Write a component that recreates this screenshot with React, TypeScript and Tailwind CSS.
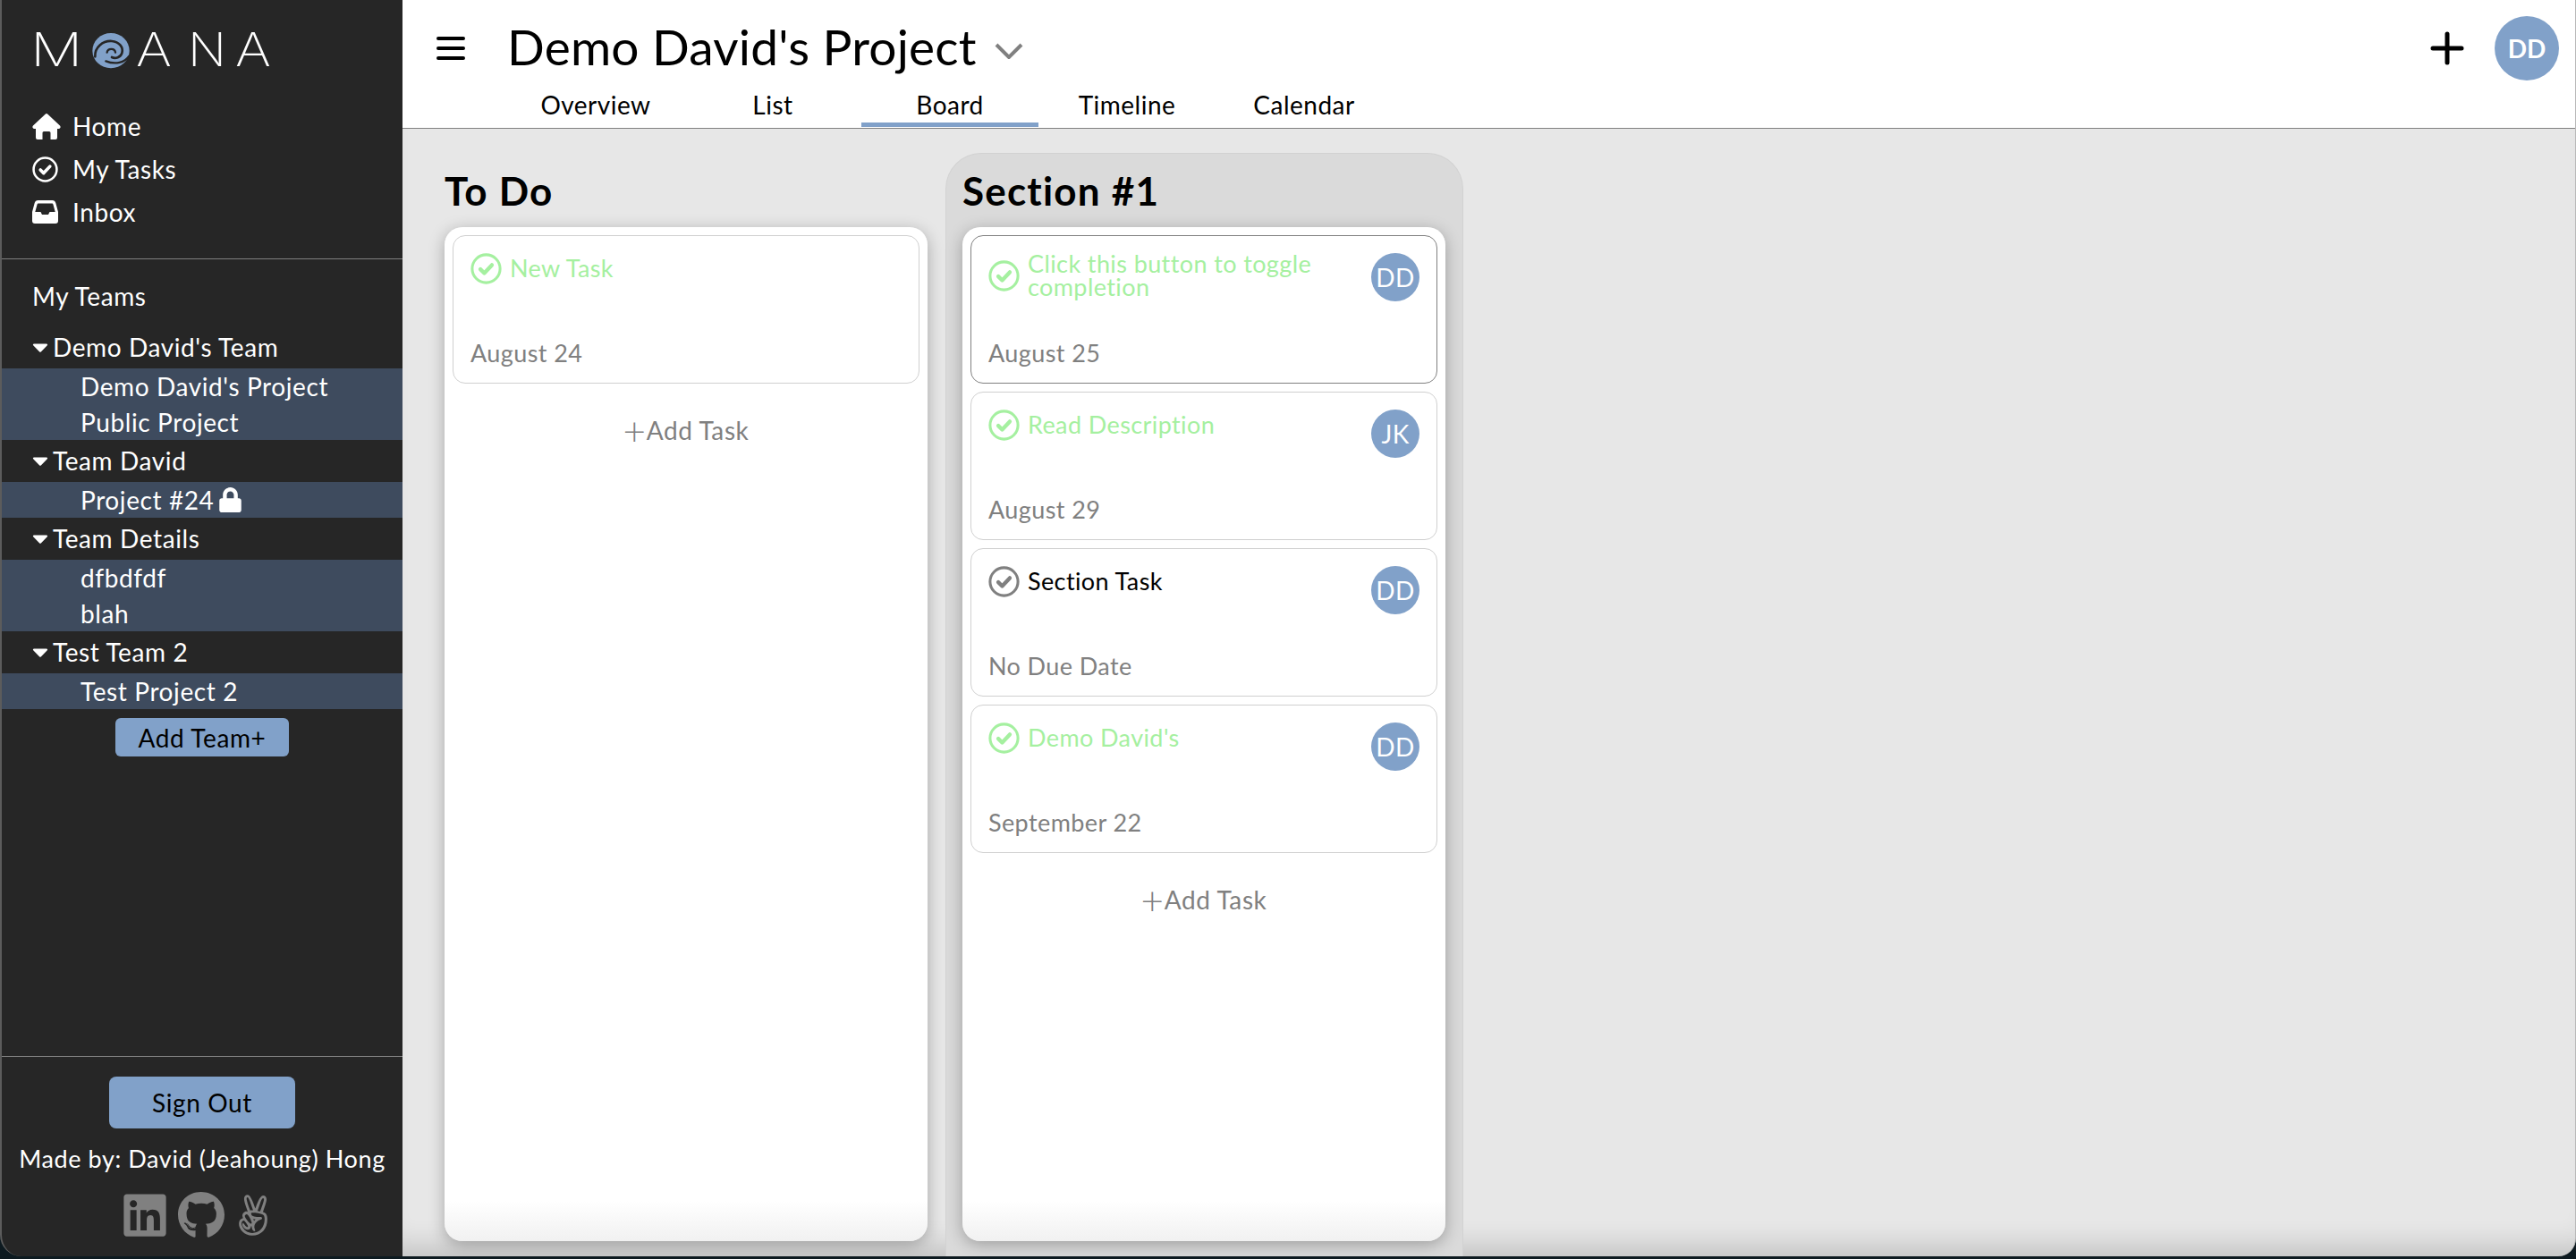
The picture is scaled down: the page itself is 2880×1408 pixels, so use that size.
import React from "react";
import { FaCaretDown, FaLinkedin, FaGithub, FaAngellist, FaLock } from "react-icons/fa";

function Check({ color, size = 35, sw = 3 }: { color: string; size?: number; sw?: number }) {
  return (
    <svg width={size} height={size} viewBox="0 0 24 24" fill="none" className="shrink-0">
      <circle cx="12" cy="12" r="10.7" stroke={color} strokeWidth={sw * 0.7} />
      <path d="M7.6 12.4l3 3 5.8-6.2" stroke={color} strokeWidth={sw} strokeLinecap="round" strokeLinejoin="round" />
    </svg>
  );
}

function HomeIcon() {
  return (
    <svg width="32" height="29" viewBox="0 0 32 29" className="shrink-0">
      <path fill="#fff" d="M14.6.7a2 2 0 0 1 2.8 0L31 13.6c1.2 1.2.5 3.4-1.2 3.4H28v10a2 2 0 0 1-2 2h-5.500v-7.500a1.500 1.500 0 0 0-1.500-1.500h-6a1.500 1.500 0 0 0-1.500 1.500V29H6a2 2 0 0 1-2-2V17H2.200C.5 17-.2 14.800 1 13.600z" />
    </svg>
  );
}

function InboxIcon() {
  return (
    <svg width="29" height="26" viewBox="0 0 29 26" className="shrink-0">
      <path fill="#fff" fillRule="evenodd" d="M6.500 0h16c2 0 3.200 1 3.800 3L29 13v10a3 3 0 0 1-3 3H3a3 3 0 0 1-3-3V13L2.700 3C3.300 1 4.500 0 6.500 0zM7 3.500c-.8 0-1.200.4-1.400 1.100L3.300 13h6.200l1.500 3h7l1.500-3h6.200l-2.300-8.400c-.2-.7-.6-1.100-1.400-1.100z" />
    </svg>
  );
}

function Swirl() {
  return (
    <svg width="42" height="40" viewBox="22 25 126 120" className="shrink-0">
      <ellipse cx="85" cy="84" rx="62" ry="59" fill="#81a1c9" />
      <g fill="none" stroke="#262626" strokeLinecap="round">
        <path d="M32 104C30 72 58 50 88 52c24 2 40 20 34 40-4 14-22 20-34 14" strokeWidth="8" />
        <path d="M72 90c2-14 26-16 28 0" strokeWidth="7" />
        <path d="M146 102c-14 22-46 30-78 17" strokeWidth="7" />
      </g>
    </svg>
  );
}

function Task({ title, date, done, avatar, hover }: { title: string; date: string; done?: boolean; avatar?: string; hover?: boolean }) {
  return (
    <div className={`h-[166px] shrink-0 rounded-[14px] border px-[19px] pt-[19px] bg-white flex flex-col tracking-[0.4px] ${hover ? "border-[#808080]" : "border-[#d0d0d0]"}`}>
      <div className="flex items-start justify-between h-[99px]">
        <div className="flex items-center gap-[9px] w-[420px]">
          <Check color={done ? "#a5f0a0" : "#808080"} />
          <div className={`text-[27px] leading-[26px] -mt-[1px] ${done ? "text-[#a5f0a0]" : "text-black"}`}>{title}</div>
        </div>
        {avatar && (
          <div className="w-[54px] h-[54px] rounded-full bg-[#81a1c9] text-white text-[28px] flex items-center justify-center shrink-0">{avatar}</div>
        )}
      </div>
      <div className="text-[27px] leading-[26px] text-[#808080]">{date}</div>
    </div>
  );
}

function AddTask() {
  return (
    <div className="h-[86px] shrink-0 flex items-center justify-center text-[28px] text-[#808080] tracking-[0.6px]">
      <span className="text-[44px] leading-none font-light">+</span>
      <span>Add Task</span>
    </div>
  );
}

function Column({ title, active, children }: { title: string; active?: boolean; children: React.ReactNode }) {
  return (
    <div className={`w-[579px] pl-[18px] pr-[19px] pb-[17px] flex flex-col rounded-t-[40px] border-x border-t ${active ? "bg-[#dadada] border-[#d2d2d2]" : "border-transparent"}`}>
      <div className="h-[82px] shrink-0 flex items-center text-[44px] tracking-[1.2px] font-bold text-black">{title}</div>
      <div className="flex-1 rounded-[20px] bg-gradient-to-b from-white from-[96%] to-[#f1f1f1] p-[9px] flex flex-col gap-[9px] shadow-[0_4px_18px_rgba(0,0,0,0.28)]">
        {children}
      </div>
    </div>
  );
}

function Team({ name, projects }: { name: string; projects: React.ReactNode[] }) {
  return (
    <div>
      <div className="h-[47px] flex items-center pl-[33px] pb-[2px] text-[28px] text-white">
        <FaCaretDown className="w-[20px] h-[28px] mr-[4px]" />
        <span>{name}</span>
      </div>
      <div className="bg-[#3e4b5e]">
        {projects.map((p, i) => (
          <div key={i} className="h-[40px] flex items-center pl-[88px] text-[28px] text-white">{p}</div>
        ))}
      </div>
    </div>
  );
}

export default function App() {
  return (
    <div className="h-[1408px] w-[2880px] bg-[#0d1a20] overflow-hidden" style={{ fontFamily: "Lato, 'Noto Sans', sans-serif" }}>
      <div className="h-[1405px] flex">
        <aside className="w-[450px] shrink-0 bg-[#262626] border-l-2 border-[#5c5c5c] rounded-bl-[24px] flex flex-col text-white tracking-[0.6px]">
          <div className="pl-[32px] pt-[37px] h-[75px] flex items-start text-[52px] leading-[38px] font-extralight tracking-normal" style={{ fontFamily: "Inter, sans-serif" }}>
            <span className="w-[69px] origin-left scale-x-[1.25]">M</span>
            <div className="w-[49px]"><Swirl /></div>
            <span className="w-[58px] origin-left scale-x-[1.17]">A</span>
            <span className="w-[53px] origin-left scale-x-[1.08]">N</span>
            <span className="origin-left scale-x-[1.17]">A</span>
          </div>
          <nav className="mt-[42px] pl-[34px] text-[28px]">
            <div className="h-[48px] flex items-center gap-[13px]"><HomeIcon /><span>Home</span></div>
            <div className="h-[48px] flex items-center gap-[16px]"><Check color="#ffffff" size={29} /><span>My Tasks</span></div>
            <div className="h-[48px] flex items-center gap-[16px]"><InboxIcon /><span>Inbox</span></div>
          </nav>
          <div className="mt-[28px] border-t border-[#808080] pt-[21px]">
            <div className="h-[40px] flex items-center pl-[34px] text-[28px]">My Teams</div>
            <div className="mt-[14px]">
              <Team name="Demo David's Team" projects={["Demo David's Project", "Public Project"]} />
              <Team name="Team David" projects={[<><span>Project #24</span><FaLock className="w-[25px] h-[28px] ml-[6px]" /></>]} />
              <Team name="Team Details" projects={["dfbdfdf", "blah"]} />
              <Team name="Test Team 2" projects={["Test Project 2"]} />
            </div>
            <div className="flex justify-center mt-[10px]">
              <button className="w-[194px] h-[43px] rounded-[6px] bg-[#81a1c9] text-black text-[28px] flex items-center justify-center">Add Team+</button>
            </div>
          </div>
          <div className="mt-auto border-t border-[#808080] pt-[22px] h-[224px] flex flex-col items-center">
            <button className="w-[208px] h-[58px] rounded-[8px] bg-[#81a1c9] text-black text-[28px] flex items-center justify-center">Sign Out</button>
            <div className="mt-[16px] text-[27px] leading-[36px]">Made by: David (Jeahoung) Hong</div>
            <div className="mt-[18px] mr-[12px] flex items-center gap-[12px] text-[#808080]">
              <FaLinkedin className="w-[50px] h-[54px]" />
              <FaGithub className="w-[52px] h-[54px]" />
              <FaAngellist className="w-[40px] h-[54px]" />
            </div>
          </div>
        </aside>
        <main className="flex-1 bg-[#e7e7e7] flex flex-col min-w-0 rounded-br-[20px] overflow-hidden border-r border-[#b8b8b8]">
          <header className="h-[144px] shrink-0 bg-white border-b border-[#808080]">
            <div className="mt-[8px] h-[92px] flex items-center pl-[38px] pr-[18px]">
              <svg width="32" height="28" viewBox="0 0 32 28" className="shrink-0">
                <path d="M2 3h28M2 14h28M2 25h28" stroke="#000" strokeWidth="4" strokeLinecap="round" />
              </svg>
              <div className="ml-[47px] -mt-[3px] text-[55px] tracking-[0.2px] leading-none text-black">Demo David's Project</div>
              <svg width="32" height="18" viewBox="0 0 32 18" fill="none" className="ml-[20px] mt-[6px]">
                <path d="M2 2l14 14L30 2" stroke="#808080" strokeWidth="4" />
              </svg>
              <svg width="38" height="38" viewBox="0 0 38 38" className="ml-auto mr-[34px]">
                <path d="M19 3v32M3 19h32" stroke="#000" strokeWidth="5" strokeLinecap="round" />
              </svg>
              <div className="w-[72px] h-[72px] rounded-full bg-[#81a1c9] text-white text-[28px] font-bold flex items-center justify-center">DD</div>
            </div>
            <div className="flex pl-[117px] h-[42px]">
              {["Overview", "List", "Board", "Timeline", "Calendar"].map((t) => (
                <div key={t} className={`w-[198px] h-[42px] flex items-start justify-center text-[28px] leading-[34px] tracking-[0.5px] text-black ${t === "Board" ? "border-b-[5px] border-[#81a1c9]" : ""}`}>{t}</div>
              ))}
            </div>
          </header>
          <div className="flex-1 min-h-0 flex pl-[28px] pt-[27px] shadow-[inset_0_-34px_30px_-22px_rgba(0,0,0,0.16)]">
            <Column title="To Do">
              <Task title="New Task" date="August 24" done />
              <AddTask />
            </Column>
            <Column title="Section #1" active>
              <Task title="Click this button to toggle completion" date="August 25" done avatar="DD" hover />
              <Task title="Read Description" date="August 29" done avatar="JK" />
              <Task title="Section Task" date="No Due Date" avatar="DD" />
              <Task title="Demo David's" date="September 22" done avatar="DD" />
              <AddTask />
            </Column>
          </div>
        </main>
      </div>
    </div>
  );
}
